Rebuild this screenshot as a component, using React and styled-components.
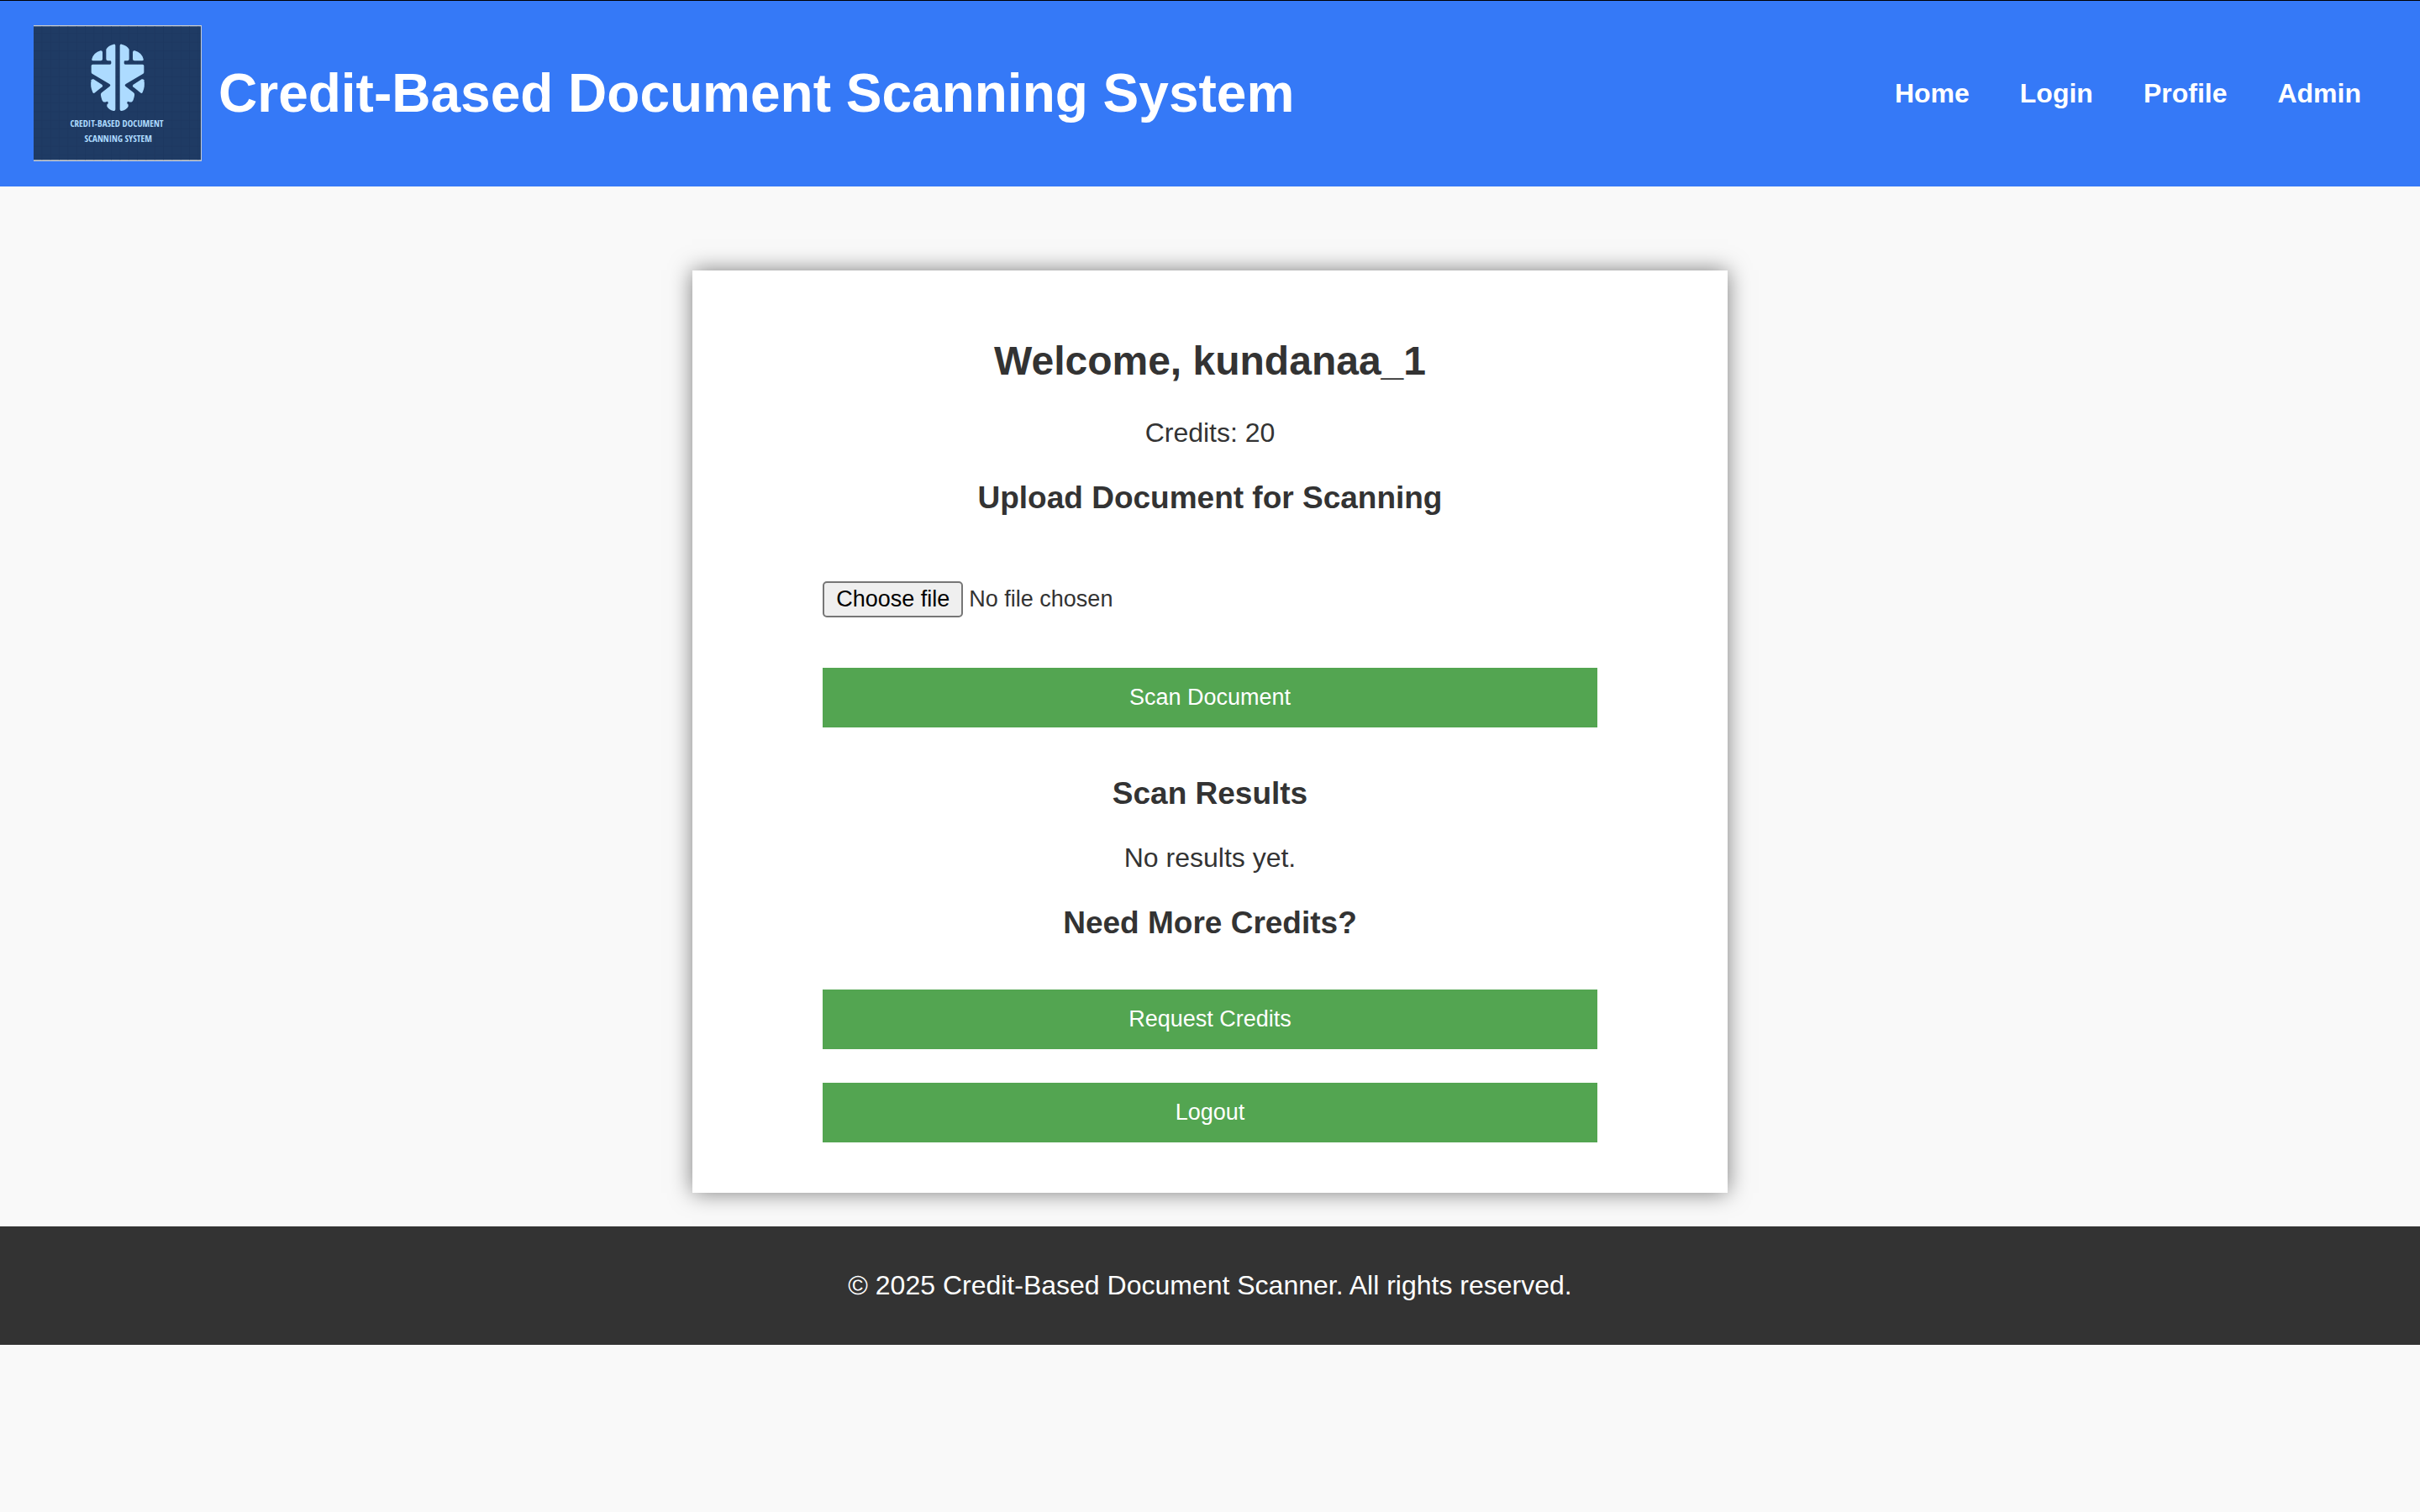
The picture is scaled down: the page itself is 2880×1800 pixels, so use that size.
import React, { useRef, useState } from "react";
import styled, { createGlobalStyle } from "styled-components";

const GlobalStyle = createGlobalStyle`
  * {
    box-sizing: border-box;
  }
  body {
    margin: 0;
    background: #f9f9f9;
    color: #333;
    font-family: Arial, "Liberation Sans", sans-serif;
    font-size: 32px;
    line-height: 37px;
  }
`;

const Header = styled.header`
  display: flex;
  align-items: center;
  justify-content: space-between;
  padding: 29px 40px 30px;
  border-top: 1px solid #000;
  background: #3579f7;
  color: #fff;
`;

const Brand = styled.div`
  display: flex;
  align-items: center;
  gap: 20px;
`;

const Logo = styled.svg`
  display: block;
  width: 200px;
  height: 162px;
`;

const Title = styled.h1`
  margin: 0;
  font-size: 64px;
  line-height: 74px;
`;

const Nav = styled.nav`
  display: flex;
  gap: 60px;
  padding: 0 30px;
`;

const NavLink = styled.a`
  color: inherit;
  font-weight: bold;
  text-decoration: none;
`;

const Main = styled.main`
  display: flex;
  flex-direction: column;
  align-items: center;
  padding: 100px 40px 40px;
`;

const Card = styled.section`
  display: flex;
  flex-direction: column;
  align-items: center;
  width: 44%;
  padding: 80px 40px 60px;
  background: #fff;
  box-shadow: 0 0 25px rgba(0, 0, 0, 0.5);
  text-align: center;
`;

const Welcome = styled.h2`
  margin: 0 0 40px;
  font-size: 48px;
  line-height: 55px;
`;

const Heading = styled.h3`
  margin: 37px 0;
  font-size: 37px;
  line-height: 43px;
`;

const Text = styled.p`
  margin: 0;
`;

const Form = styled.form`
  display: flex;
  flex-direction: column;
  gap: 40px;
  width: 80%;
  padding: 21px 0 20px;
`;

const FileField = styled.div`
  display: flex;
  align-items: center;
  gap: 7px;
  padding: 20px 0;
  font-size: 27px;
  line-height: 31px;
`;

const FileButton = styled.button`
  padding: 4px 14px;
  border: 2px solid #767676;
  border-radius: 5px;
  background: #efefef;
  color: #000;
  font: inherit;
`;

const Button = styled.button`
  width: 100%;
  padding: 20px;
  border: 0;
  background: #53a551;
  color: #fff;
  font-family: inherit;
  font-size: 27px;
  line-height: 31px;
  cursor: pointer;
`;

const Actions = styled.div`
  display: flex;
  flex-direction: column;
  gap: 40px;
  width: 80%;
  padding-top: 21px;
`;

const Footer = styled.footer`
  padding: 52px 20px;
  background: #333;
  color: #fff;
  text-align: center;
`;

const links = ["Home", "Login", "Profile", "Admin"];

function BrainHalf({ transform }) {
  return (
    <g transform={transform}>
      <path d="M328 211Q334 188 359 181Q366 180 366 187V211Q366 217 360 217H332Q326 217 328 211Z" />
      <path d="M412 163Q412 157 406 158Q386 162 379 176V211Q379 217 385 217H393Q397 217 397 221V226Q397 230 393 230H331Q326 230 326 235V258Q326 262 330 264L391 300Q397 304 392 308L363 331Q358 335 360 341Q363 358 369 364Q375 366 382 362Q388 363 386 370Q380 373 382 380Q388 391 405 396Q412 397 412 391Z" />
      <path d="M334 283L364 302Q369 306 365 310L339 331Q334 335 331 330Q321 308 326 286Q329 281 334 283Z" />
    </g>
  );
}

function BrandLogo() {
  return (
    <Logo viewBox="120 90 600 486" role="img" aria-label="Credit-Based Document Scanning System">
      <defs>
        <pattern id="grid" x="120" y="90" width="31" height="31" patternUnits="userSpaceOnUse">
          <path d="M30 0V31M0 30H31" stroke="#1b365e" strokeWidth="2" fill="none" />
        </pattern>
      </defs>
      <rect x="120" y="90" width="600" height="486" fill="#c5cbd2" />
      <rect x="120" y="94" width="597" height="477" fill="#1f3b64" />
      <rect x="120" y="94" width="597" height="477" fill="url(#grid)" />
      <g fill="#addbff">
        <BrainHalf />
        <BrainHalf transform="translate(840 0) scale(-1 1)" />
        <g
          fontFamily="'Noto Sans ExtraCondensed', 'Open Sans Condensed', 'Roboto Condensed', 'Liberation Sans', sans-serif"
          fontSize="33"
          fontWeight="500"
          textAnchor="middle"
        >
          <text x="417" y="452">CREDIT-BASED DOCUMENT</text>
          <text x="422" y="507">SCANNING SYSTEM</text>
        </g>
      </g>
    </Logo>
  );
}

function FilePicker() {
  const input = useRef(null);
  const [name, setName] = useState("No file chosen");
  return (
    <FileField>
      <input
        ref={input}
        id="document"
        type="file"
        hidden
        onChange={(e) => setName(e.target.files[0]?.name ?? "No file chosen")}
      />
      <FileButton type="button" onClick={() => input.current.click()}>
        Choose file
      </FileButton>
      <label htmlFor="document">{name}</label>
    </FileField>
  );
}

export default function App() {
  return (
    <>
      <GlobalStyle />
      <Header>
        <Brand>
          <BrandLogo />
          <Title>Credit-Based Document Scanning System</Title>
        </Brand>
        <Nav>
          {links.map((link) => (
            <NavLink key={link} href={`#${link.toLowerCase()}`}>
              {link}
            </NavLink>
          ))}
        </Nav>
      </Header>
      <Main>
        <Card>
          <Welcome>Welcome, kundanaa_1</Welcome>
          <Text>Credits: 20</Text>
          <Heading>Upload Document for Scanning</Heading>
          <Form onSubmit={(e) => e.preventDefault()}>
            <FilePicker />
            <Button type="submit">Scan Document</Button>
          </Form>
          <Heading>Scan Results</Heading>
          <Text>No results yet.</Text>
          <Heading>Need More Credits?</Heading>
          <Actions>
            <Button type="button">Request Credits</Button>
            <Button type="button">Logout</Button>
          </Actions>
        </Card>
      </Main>
      <Footer>
        <Text>© 2025 Credit-Based Document Scanner. All rights reserved.</Text>
      </Footer>
    </>
  );
}
